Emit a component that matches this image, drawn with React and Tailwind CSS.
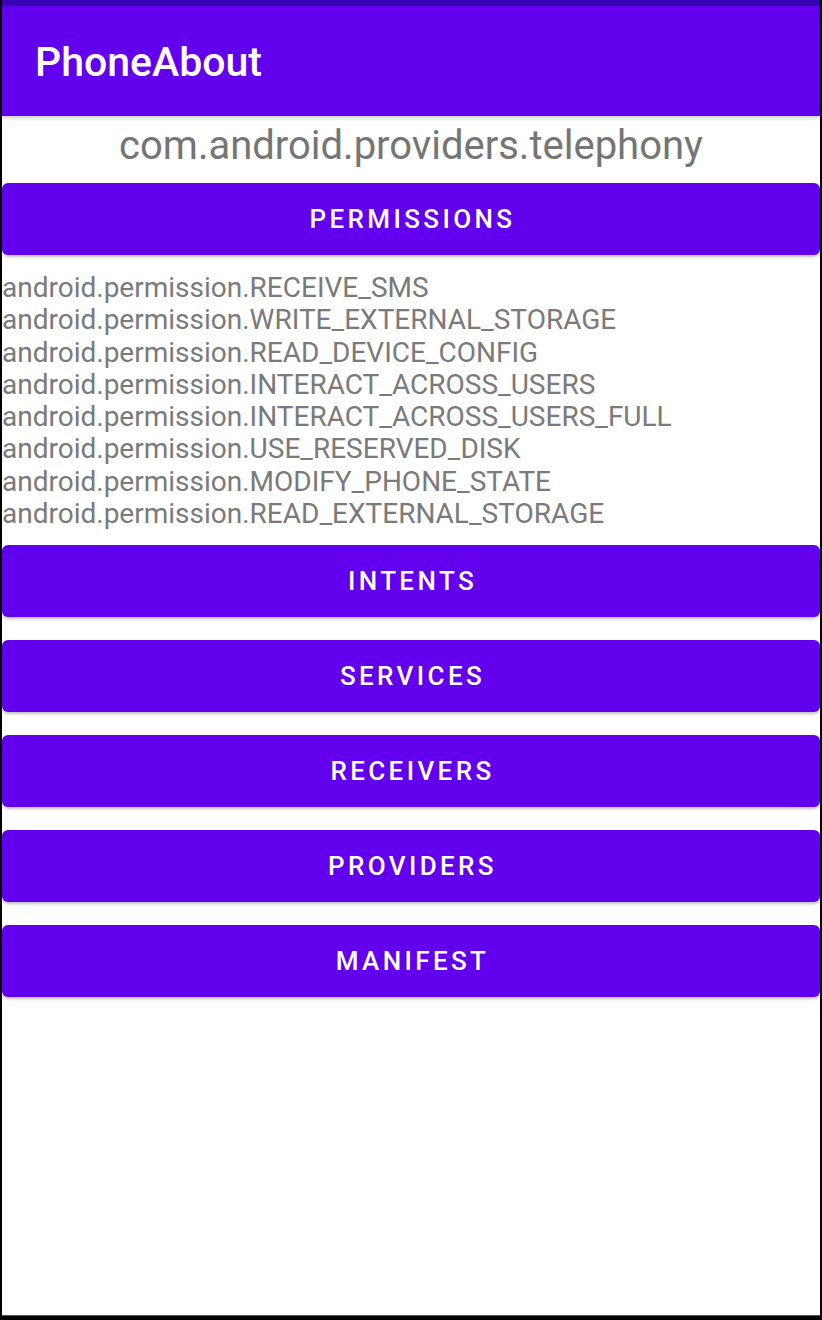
import React from 'react';

const permissions = [
  "android.permission.RECEIVE_SMS",
  "android.permission.WRITE_EXTERNAL_STORAGE",
  "android.permission.READ_DEVICE_CONFIG",
  "android.permission.INTERACT_ACROSS_USERS",
  "android.permission.INTERACT_ACROSS_USERS_FULL",
  "android.permission.USE_RESERVED_DISK",
  "android.permission.MODIFY_PHONE_STATE",
  "android.permission.READ_EXTERNAL_STORAGE",
];

// Material-style contained button
const PurpleButton = ({ label, className = "" }) => (
  <button
    className={`w-full h-[72px] rounded-[6px] bg-[#6200EE] text-white text-[26px] font-medium tracking-[0.13em] uppercase shadow-[0_2px_3px_rgba(0,0,0,0.25)] flex items-center justify-center pl-[3px] ${className}`}
  >
    {label}
  </button>
);

export default function App() {
  return (
    <div
      className="w-[822px] h-[1320px] bg-white border-x-2 border-b-[4px] border-black flex flex-col overflow-hidden"
      style={{ fontFamily: "Roboto, 'Liberation Sans', sans-serif" }}
    >
      {/* Status bar + app bar */}
      <div className="h-[6px] bg-[#3700B3]"></div>
      <div className="h-[110px] bg-[#6200EE] flex items-center px-[33px] pt-[3px] shadow-[0_2px_4px_rgba(0,0,0,0.2)] relative z-10">
        <h1 className="text-white text-[41px] font-medium">PhoneAbout</h1>
      </div>

      {/* Package name */}
      <div className="h-[67px] flex items-center justify-center pb-[7px]">
        <span className="text-[#757575] text-[40px]">com.android.providers.telephony</span>
      </div>

      <PurpleButton label="Permissions" />

      <div className="mt-[17px] text-[#7a7a7a] text-[28px] leading-[32.3px]">
        {permissions.map((p) => (
          <div key={p}>{p}</div>
        ))}
      </div>

      <PurpleButton label="Intents" className="mt-[15px]" />
      <PurpleButton label="Services" className="mt-[23px]" />
      <PurpleButton label="Receivers" className="mt-[23px]" />
      <PurpleButton label="Providers" className="mt-[23px]" />
      <PurpleButton label="Manifest" className="mt-[23px]" />

      <div className="flex-1"></div>
      <div className="h-[1px] bg-[#555]"></div>
    </div>
  );
}
